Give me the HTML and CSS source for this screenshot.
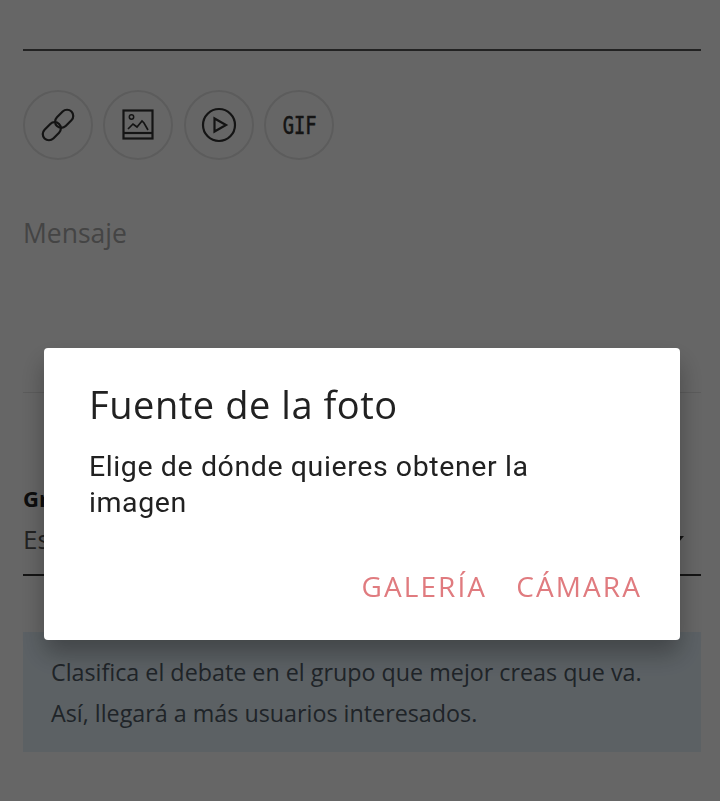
FILE: index.html
```html
<!DOCTYPE html>
<html>

<head>
  <meta charset="utf-8">
  <meta name="viewport" content="width=device-width">
  <title>Nuevo debate</title>

  <link rel="stylesheet" href="styles.css">
</head>

<body>
  <main>
    <div class="title-field"></div>

    <section class="tools">
      <button class="tool">
        <svg width="40" height="40" viewBox="0 0 40 40" fill="none" stroke="#333" stroke-width="2.2">
          <g transform="rotate(-45 20 20)">
            <rect x="1" y="13.8" width="20.5" height="12.4" rx="6.2"/>
            <rect x="18.5" y="13.8" width="20.5" height="12.4" rx="6.2"/>
          </g>
        </svg>
      </button>
      <button class="tool">
        <svg width="32" height="32" viewBox="0 0 32 32" fill="none" stroke="#333" stroke-width="2.2">
          <rect x="1.5" y="1.5" width="29" height="28"/>
          <path d="M1.5 24h29"/>
          <circle cx="9.5" cy="8" r="2.2" stroke-width="1.5"/>
          <path d="M6 20l5-5 4 3 5-6 2 2 4 7" stroke-width="1.7"/>
        </svg>
      </button>
      <button class="tool">
        <svg width="36" height="36" viewBox="0 0 36 36" fill="none" stroke="#333" stroke-width="2.2">
          <circle cx="18" cy="18" r="16"/>
          <path d="M13.5 11.5v13L25 18z"/>
        </svg>
      </button>
      <button class="tool"><span class="gif">GIF</span></button>
    </section>

    <div class="message">Mensaje</div>

    <label class="group-label">Grupo</label>
    <div class="group-select">
      <span>Escoge un grupo</span>
      <svg width="10" height="6" viewBox="0 0 10 6" fill="#333"><path d="M0 0h10L5 6z"/></svg>
    </div>

    <aside class="hint">
      <p>Clasifica el debate en el grupo que mejor creas que va.</p>
      <p>Así, llegará a más usuarios interesados.</p>
    </aside>
  </main>

  <div class="overlay">
    <div class="dialog">
      <h1>Fuente de la foto</h1>
      <p>Elige de dónde quieres obtener la imagen</p>
      <div class="actions">
        <button>GALERÍA</button>
        <button>CÁMARA</button>
      </div>
    </div>
  </div>
</body>

</html>
```

FILE: styles.css
```css
* {
  box-sizing: border-box;
}

html, body {
  height: 100%;
}

body {
  margin: 0;
  background-color: #fff;
  color: #333;
  font-family: "Open Sans", sans-serif;
  overflow: hidden;
}

main {
  display: flex;
  flex-direction: column;
  padding: 0 19px 0 23px;
}

.title-field {
  height: 51px;
  border-bottom: 2px solid #555;
}

.tools {
  display: flex;
  gap: 10.4px;
  margin-top: 39px;
}

.tool {
  display: flex;
  align-items: center;
  justify-content: center;
  width: 70px;
  height: 70px;
  padding: 0;
  border: 2px solid #e6e6e6;
  border-radius: 50%;
  background: none;
}

.gif {
  display: inline-block;
  color: #333;
  font-family: "DejaVu Sans Mono", monospace;
  font-size: 25px;
  -webkit-text-stroke: 0.6px #333;
  transform: scaleX(0.75);
}

.message {
  height: 178px;
  margin-top: 55px;
  border-bottom: 1px solid #e6e6e6;
  color: #aaa;
  font-size: 26.5px;
  line-height: 36px;
}

.group-label {
  margin-top: 92px;
  color: #222;
  font-size: 22px;
  font-weight: bold;
  line-height: 26px;
}

.group-select {
  display: flex;
  align-items: center;
  justify-content: space-between;
  height: 65px;
  padding: 2px 17px 10px 0;
  border-bottom: 2px solid #333;
  color: #555;
  font-size: 26px;
}

.hint {
  height: 120px;
  margin-top: 56px;
  padding: 20px 28px;
  background-color: #e6f3fb;
  color: #4f5a65;
  font-size: 23.3px;
}

.hint p {
  margin: 0;
  line-height: 41px;
  white-space: nowrap;
}

.overlay {
  position: fixed;
  top: 0;
  left: 0;
  width: 100%;
  height: 100%;
  background-color: rgba(0, 0, 0, 0.6);
}

.dialog {
  position: absolute;
  top: 348px;
  left: 44px;
  width: 636px;
  height: 292px;
  padding: 31px 38px 0 45px;
  border-radius: 4px;
  background-color: #fff;
  box-shadow: 0 14px 26px rgba(0, 0, 0, 0.3);
}

.dialog h1 {
  margin: 0;
  color: #212121;
  font-family: "Open Sans", sans-serif;
  font-size: 38px;
  font-weight: 400;
  letter-spacing: 0.55px;
  line-height: 50px;
}

.dialog p {
  max-width: 480px;
  margin: 20px 0 0;
  color: #212121;
  font-family: Roboto, sans-serif;
  font-size: 28.5px;
  letter-spacing: 0.6px;
  line-height: 36px;
}

.actions {
  display: flex;
  justify-content: flex-end;
  gap: 29px;
  margin-top: 47px;
}

.actions button {
  padding: 0;
  border: 0;
  background: none;
  color: #e07b7f;
  font-family: "Open Sans", sans-serif;
  font-size: 28px;
  letter-spacing: 2.1px;
  line-height: 36px;
}
```
